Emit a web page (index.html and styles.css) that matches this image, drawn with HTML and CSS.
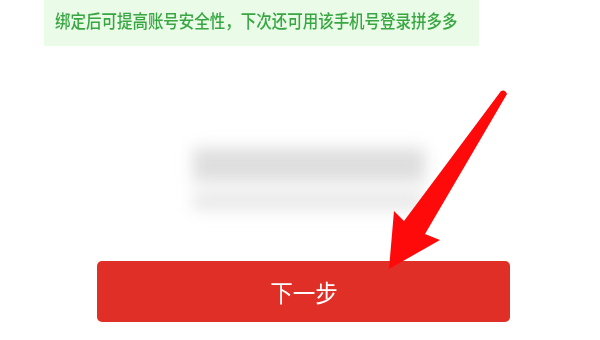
FILE: index.html
```html
<!DOCTYPE html>
<html lang="zh">
<head>
<meta charset="utf-8">
<link rel="stylesheet" href="styles.css">
</head>
<body>
<div class="page">
  <div class="notice"><span class="notice-text">绑定后可提高账号安全性，下次还可用该手机号登录拼多多</span></div>
  <div class="content">
    <div class="blurred">
      <div class="blur-line blur-line--top"></div>
      <div class="blur-line blur-line--bottom"></div>
    </div>
    <button class="next-btn"><span class="next-label">下一步</span></button>
  </div>
  <svg class="arrow" width="600" height="340" viewBox="0 0 600 340">
    <path d="M501 91 Q505 89 507 94 L425 234 L440 240 L389 269 L394 211 L404 221 Z" fill="#ff0a0a"/>
  </svg>
</div>
</body>
</html>
```
FILE: styles.css
```css
html, body {
  margin: 0;
  padding: 0;
  background: #ffffff;
}
.page {
  position: relative;
  width: 600px;
  height: 340px;
  overflow: hidden;
  font-family: "Noto Sans CJK SC", "Noto Sans", sans-serif;
}
.notice {
  margin-left: 44px;
  width: 435px;
  height: 46px;
  box-sizing: border-box;
  padding-left: 11px;
  background: #eafbe8;
  white-space: nowrap;
}
.notice-text {
  display: inline-block;
  color: #38a742;
  font-size: 18px;
  font-weight: 500;
  line-height: 40px;
  transform: scaleX(0.86);
  transform-origin: left center;
}
.content {
  display: flex;
  flex-direction: column;
  align-items: center;
  padding-top: 102px;
}
.blurred {
  display: flex;
  flex-direction: column;
  gap: 10px;
  width: 232px;
  margin-left: 18px;
  filter: blur(8px);
}
.blur-line {
  background: #dedede;
}
.blur-line--top {
  height: 34px;
}
.blur-line--bottom {
  height: 18px;
  background: #e8e8e8;
}
.next-btn {
  margin-top: 51px;
  margin-left: 7px;
  width: 413px;
  height: 61px;
  border: none;
  border-radius: 5px;
  background: #e02f27;
  padding: 0;
}
.next-label {
  display: inline-block;
  color: #ffffff;
  font-family: "Noto Sans CJK SC", "Noto Sans", sans-serif;
  font-size: 24px;
  transform: scaleX(0.94);
}
.arrow {
  position: absolute;
  left: 0;
  top: 0;
}
```
